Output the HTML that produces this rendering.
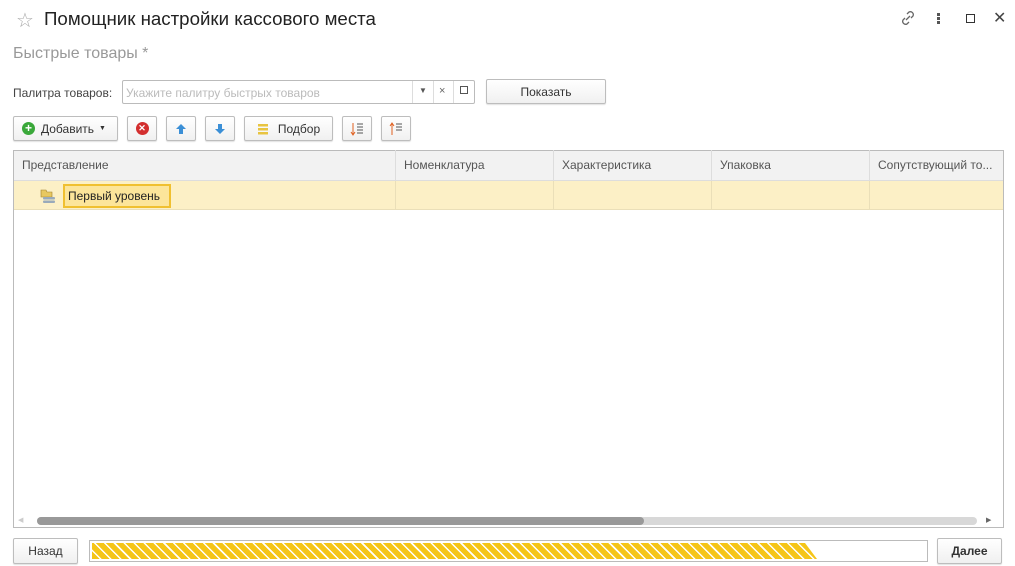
<!DOCTYPE html><html><head><meta charset="utf-8"><style>
*{box-sizing:border-box}body{margin:0;width:1015px;height:566px;background:#fff;font-family:"Liberation Sans",sans-serif;font-size:12px;color:#333;position:relative;overflow:hidden}
.a{position:absolute}
.btn{position:absolute;border:1px solid #bdbdbd;border-radius:2px;background:linear-gradient(#fff,#f0f0f0);box-shadow:0 1px 1px rgba(0,0,0,.12);display:flex;align-items:center;justify-content:center;font-size:12px;color:#333}
.th{position:absolute;top:150px;height:31px;border-right:1px solid #ddd;padding:8px 8px;color:#555}
.vl{position:absolute;top:181px;height:29px;width:1px;background:#eadfb8}
</style></head><body>
<div class="a" style="left:16px;top:8px;font-size:20px;color:#aaa">☆</div>
<div class="a" style="left:44px;top:8px;font-size:18.7px;color:#222">Помощник настройки кассового места</div>
<svg class="a" style="left:899px;top:9px" width="18" height="18" viewBox="0 0 18 18" fill="none" stroke="#666" stroke-width="1.3"><path d="M7 11l4-4M8 5l2-2a3 3 0 0 1 4 4l-2 2M10 13l-2 2a3 3 0 0 1-4-4l2-2"/></svg>
<div class="a" style="left:937px;top:13px;width:3px;height:3px;background:#555;box-shadow:0 4px #555,0 8px #555"></div>
<div class="a" style="left:966px;top:14px;width:9px;height:9px;border:1.3px solid #333"></div>
<div class="a" style="left:993px;top:8px;font-size:16px;color:#444">✕</div>
<div class="a" style="left:13px;top:45px;font-size:16px;color:#999">Быстрые товары *</div>
<div class="a" style="left:13px;top:86px;color:#444">Палитра товаров:</div>
<div class="a" style="left:122px;top:80px;width:353px;height:24px;border:1px solid #bbb;border-radius:2px"></div>
<div class="a" style="left:126px;top:86px;color:#bbb">Укажите палитру быстрых товаров</div>
<div class="a" style="left:412px;top:81px;width:1px;height:22px;background:#ddd"></div>
<div class="a" style="left:433px;top:81px;width:1px;height:22px;background:#ddd"></div>
<div class="a" style="left:453px;top:81px;width:1px;height:22px;background:#ddd"></div>
<div class="a" style="left:419px;top:86px;font-size:8px;color:#555">▼</div>
<div class="a" style="left:439px;top:85px;font-size:11px;color:#666">×</div>
<div class="a" style="left:460px;top:86px;width:8px;height:8px;border:1px solid #555"></div>
<div class="btn" style="left:486px;top:79px;width:120px;height:25px">Показать</div>
<div class="btn" style="left:13px;top:116px;width:105px;height:25px;justify-content:flex-start;padding-left:8px"><span style="display:inline-block;width:13px;height:13px;border-radius:50%;background:#3aa83a;color:#fff;font-size:12px;line-height:12px;text-align:center;font-weight:bold;margin-right:6px">+</span>Добавить <span style="font-size:7px;margin-left:5px">▼</span></div>
<div class="btn" style="left:127px;top:116px;width:30px;height:25px"><span style="display:inline-block;width:13px;height:13px;border-radius:50%;background:#d32f2f;color:#fff;font-size:9px;line-height:13px;text-align:center;font-weight:bold">✕</span></div>
<div class="btn" style="left:166px;top:116px;width:30px;height:25px"><svg width="12" height="12"><path d="M6 1L11 6H8v5H4V6H1z" fill="#3b8fd6"/></svg></div>
<div class="btn" style="left:205px;top:116px;width:30px;height:25px"><svg width="12" height="12"><path d="M6 11L11 6H8V1H4v5H1z" fill="#3b8fd6"/></svg></div>
<div class="btn" style="left:244px;top:116px;width:89px;height:25px"><svg width="12" height="12" style="margin-right:9px"><rect x="1" y="1" width="10" height="2.5" fill="#e8c440"/><rect x="1" y="5" width="10" height="2.5" fill="#e8c440"/><rect x="1" y="9" width="10" height="2.5" fill="#e8c440"/></svg>Подбор</div>
<div class="btn" style="left:342px;top:116px;width:30px;height:25px"><svg width="14" height="14"><path d="M3 1v11M1 10l2 3 2-3" stroke="#e06020" fill="none"/><path d="M7 2h6M7 5h6M7 8h6M7 11h6" stroke="#555"/></svg></div>
<div class="btn" style="left:381px;top:116px;width:30px;height:25px"><svg width="14" height="14"><path d="M3 13V2M1 4l2-3 2 3" stroke="#e06020" fill="none"/><path d="M7 2h6M7 5h6M7 8h6" stroke="#555"/></svg></div>
<div class="a" style="left:13px;top:150px;width:991px;height:378px;border:1px solid #bbb"></div>
<div class="a" style="left:14px;top:151px;width:989px;height:30px;background:#f2f2f2;border-bottom:1px solid #ddd"></div>
<div class="th" style="left:14px;width:382px">Представление</div>
<div class="th" style="left:396px;width:158px">Номенклатура</div>
<div class="th" style="left:554px;width:158px">Характеристика</div>
<div class="th" style="left:712px;width:158px">Упаковка</div>
<div class="th" style="left:870px;width:133px;border:none;white-space:nowrap;overflow:hidden">Сопутствующий то...</div>
<div class="a" style="left:14px;top:181px;width:989px;height:29px;background:#fcf0c6;border-bottom:1px solid #eadfb8"></div>
<div class="vl" style="left:395px"></div><div class="vl" style="left:553px"></div><div class="vl" style="left:711px"></div><div class="vl" style="left:869px"></div>
<svg class="a" style="left:40px;top:188px" width="16" height="16"><path d="M1 2h5l1 2h5v5H1z" fill="#e8c860" stroke="#a08030" stroke-width=".6"/><rect x="3" y="9" width="12" height="2.5" rx="1" fill="#9ab"/><rect x="3" y="12.5" width="12" height="2.5" rx="1" fill="#9ab"/></svg>
<div class="a" style="left:63px;top:184px;width:108px;height:24px;border:2px solid #f0c030;background:#fce59a;padding:3px 3px;color:#222">Первый уровень</div>
<div class="a" style="left:37px;top:517px;width:940px;height:8px;border-radius:4px;background:#d8d8d8"></div>
<div class="a" style="left:37px;top:517px;width:607px;height:8px;border-radius:4px;background:#999"></div>
<div class="a" style="left:18px;top:516px;font-size:7px;color:#ccc">◀</div>
<div class="a" style="left:986px;top:516px;font-size:7px;color:#666">▶</div>
<div class="btn" style="left:13px;top:538px;width:65px;height:26px">Назад</div>
<div class="a" style="left:89px;top:540px;width:839px;height:22px;border:1px solid #bbb;padding:2px">
<div style="width:725px;height:16px;background:repeating-linear-gradient(45deg,#f5c518 0 5.5px,#fff 5.5px 7px);clip-path:polygon(0 0,713px 0,100% 100%,0 100%)"></div></div>
<div class="btn" style="left:937px;top:538px;width:65px;height:26px;font-weight:bold">Далее</div>
</body></html>
